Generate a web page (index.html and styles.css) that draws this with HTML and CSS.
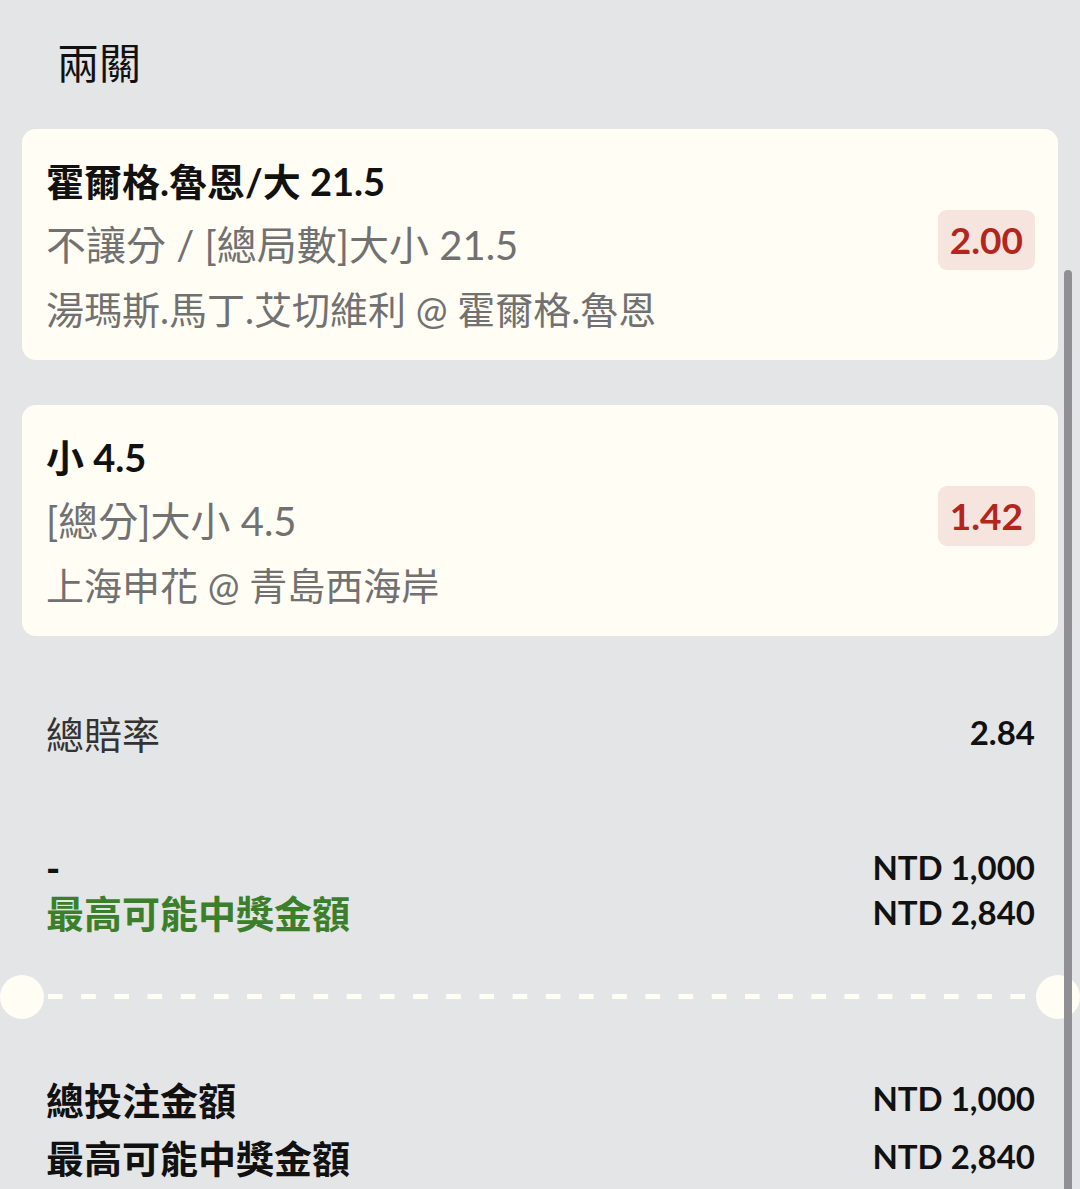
FILE: index.html
```
<!DOCTYPE html>
<html lang="zh-Hant">
<head>
  <meta charset="utf-8">
  <title>兩關</title>
  <link rel="stylesheet" href="styles.css">
</head>
<body>
  <div class="slip">
    <h1 class="slip-title">兩關</h1>

    <div class="leg">
      <div class="leg-info">
        <div class="leg-pick">霍爾格.魯恩/大 21.5</div>
        <div class="leg-market">不讓分 / [總局數]大小 21.5</div>
        <div class="leg-event">湯瑪斯.馬丁.艾切維利 @ 霍爾格.魯恩</div>
      </div>
      <span class="odds">2.00</span>
    </div>

    <div class="leg">
      <div class="leg-info">
        <div class="leg-pick">小 4.5</div>
        <div class="leg-market">[總分]大小 4.5</div>
        <div class="leg-event">上海申花 @ 青島西海岸</div>
      </div>
      <span class="odds">1.42</span>
    </div>

    <div class="row total-odds">
      <span>總賠率</span>
      <span class="num">2.84</span>
    </div>

    <div class="stake">
      <div class="row">
        <span class="dash">-</span>
        <span class="num">NTD 1,000</span>
      </div>
      <div class="row">
        <span class="win">最高可能中獎金額</span>
        <span class="num">NTD 2,840</span>
      </div>
    </div>

    <div class="tear">
      <span class="notch"></span>
      <span class="tear-line"></span>
      <span class="notch"></span>
    </div>

    <div class="totals">
      <div class="row">
        <span>總投注金額</span>
        <span class="num">NTD 1,000</span>
      </div>
      <div class="row">
        <span>最高可能中獎金額</span>
        <span class="num">NTD 2,840</span>
      </div>
    </div>
  </div>

  <div class="scrollbar"></div>
</body>
</html>
```

FILE: styles.css
```
html, body {
  margin: 0;
  height: 100%;
}
body {
  background-color: #e4e5e7;
  font-family: Lato, "Noto Sans CJK TC", sans-serif;
  color: #111;
  overflow: hidden;
}

.slip {
  padding: 36px 22px 0;
}

.slip-title {
  margin: 0 0 38px 35px;
  font-size: 42px;
  font-weight: 400;
  line-height: 55px;
}

/* one leg of the parlay */
.leg {
  display: flex;
  align-items: center;
  justify-content: space-between;
  height: 231px;
  box-sizing: border-box;
  padding: 20px 23px 19px 24px;
  margin-bottom: 45px;
  background-color: #fffdf4;
  border-radius: 14px;
}
.leg-info {
  font-size: 38px;
  line-height: 64px;
  white-space: nowrap;
}
.leg-pick {
  font-weight: 700;
  color: #111;
}
.leg-market,
.leg-event {
  color: #717171;
}
.leg-market {
  font-size: 40px;
}

.odds {
  margin-top: -10px;
  padding: 0 12px;
  height: 60px;
  line-height: 60px;
  background-color: #f6e5de;
  border-radius: 9px;
  color: #b3261e;
  font-weight: 700;
  font-size: 37px;
}

/* summary rows */
.row {
  display: flex;
  justify-content: space-between;
  align-items: center;
  padding: 0 23px 0 24px;
  white-space: nowrap;
}
.num {
  font-weight: 700;
  font-size: 33px;
}

.total-odds {
  margin-top: 71px;
  height: 50px;
  font-size: 38px;
  color: #333;
}
.total-odds .num {
  color: #111;
}

.stake {
  margin-top: 87px;
}
.stake .row {
  height: 45px;
  font-size: 38px;
}
.dash {
  font-weight: 900;
  font-size: 38px;
}
.win {
  color: #3c7f2b;
  font-weight: 700;
}

/* ticket tear line */
.tear {
  display: flex;
  align-items: center;
  margin: 40px -22px 0;
  height: 45px;
}
.notch {
  width: 44px;
  height: 44px;
  border-radius: 50%;
  background-color: #fffdf4;
  flex: none;
}
.tear-line {
  flex: 1;
  height: 5px;
  margin: 0 2px 0 4px;
  background-image: linear-gradient(to right, #fffdf4 15px, transparent 15px);
  background-size: 33.2px 5px;
}

.totals {
  margin-top: 50px;
}
.totals .row {
  height: 58px;
  font-size: 38px;
  font-weight: 700;
}

.scrollbar {
  position: absolute;
  top: 270px;
  right: 8px;
  width: 8px;
  height: 930px;
  background-color: #8f8f94;
  border-radius: 4px;
}
```
